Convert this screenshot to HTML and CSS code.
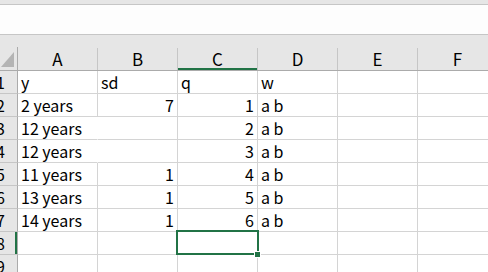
FILE: index.html
```html
<!DOCTYPE html>
<html lang="en">
<head>
    <meta charset="UTF-8">
    <title>Sheet1</title>
    <link rel="stylesheet" href="styles.css">
</head>
<body>
    <div class="formula-bar"></div>
    <div class="sheet">
        <div class="col-head-row">
            <div class="corner"><span class="corner-tri"></span></div>
            <div class="col-head">A</div>
            <div class="col-head">B</div>
            <div class="col-head active">C</div>
            <div class="col-head">D</div>
            <div class="col-head">E</div>
            <div class="col-head">F</div>
        </div>

        <div class="row">
            <div class="row-head">1</div>
            <div class="cell">y</div>
            <div class="cell">sd</div>
            <div class="cell">q</div>
            <div class="cell">w</div>
            <div class="cell"></div>
            <div class="cell"></div>
        </div>
        <div class="row">
            <div class="row-head">2</div>
            <div class="cell">2 years</div>
            <div class="cell num">7</div>
            <div class="cell num">1</div>
            <div class="cell">a b</div>
            <div class="cell"></div>
            <div class="cell"></div>
        </div>
        <div class="row">
            <div class="row-head">3</div>
            <div class="cell spill">12 years</div>
            <div class="cell"></div>
            <div class="cell num">2</div>
            <div class="cell">a b</div>
            <div class="cell"></div>
            <div class="cell"></div>
        </div>
        <div class="row">
            <div class="row-head">4</div>
            <div class="cell spill">12 years</div>
            <div class="cell"></div>
            <div class="cell num">3</div>
            <div class="cell">a b</div>
            <div class="cell"></div>
            <div class="cell"></div>
        </div>
        <div class="row">
            <div class="row-head">5</div>
            <div class="cell">11 years</div>
            <div class="cell num">1</div>
            <div class="cell num">4</div>
            <div class="cell">a b</div>
            <div class="cell"></div>
            <div class="cell"></div>
        </div>
        <div class="row">
            <div class="row-head">6</div>
            <div class="cell">13 years</div>
            <div class="cell num">1</div>
            <div class="cell num">5</div>
            <div class="cell">a b</div>
            <div class="cell"></div>
            <div class="cell"></div>
        </div>
        <div class="row">
            <div class="row-head">7</div>
            <div class="cell">14 years</div>
            <div class="cell num">1</div>
            <div class="cell num">6</div>
            <div class="cell">a b</div>
            <div class="cell"></div>
            <div class="cell"></div>
        </div>
        <div class="row">
            <div class="row-head active">8</div>
            <div class="cell"></div>
            <div class="cell"></div>
            <div class="cell selected"><span class="fill-handle"></span></div>
            <div class="cell"></div>
            <div class="cell"></div>
            <div class="cell"></div>
        </div>
        <div class="row">
            <div class="row-head">9</div>
            <div class="cell"></div>
            <div class="cell"></div>
            <div class="cell"></div>
            <div class="cell"></div>
            <div class="cell"></div>
            <div class="cell"></div>
        </div>
    </div>
</body>
</html>
```

FILE: styles.css
```css
body {
    margin: 0;
    width: 488px;
    height: 272px;
    overflow: hidden;
    background: #ffffff;
    font-family: "Noto Sans CJK SC", "Noto Sans", sans-serif;
    color: #000000;
}
.formula-bar {
    height: 30px;
    background: #fdfdfd;
    border-top: 4px solid #e6e6e6;
    border-bottom: 1px solid #c6c6c6;
    box-shadow: inset 0 1px 0 #c6c6c6;
}
.sheet {
    background: #e6e6e6;
    padding-top: 13px;
    width: 488px;
    overflow: hidden;
}
.col-head-row,
.row {
    display: grid;
    grid-template-columns: 18px repeat(6, 80px);
}
.col-head-row {
    height: 22px;
    border-bottom: 1px solid #ababab;
}
.corner {
    position: relative;
    border-right: 1px solid #ababab;
    margin-top: -1px;
}
.corner-tri {
    position: absolute;
    right: 3px;
    bottom: 3px;
    width: 0;
    height: 0;
    border-left: 13px solid transparent;
    border-bottom: 15px solid #b4b4b4;
}
.col-head {
    border-right: 1px solid #c6c6c6;
    text-align: center;
    font-size: 17px;
    line-height: 22px;
    color: #000000;
}
.col-head.active {
    box-shadow: inset 0 -2px 0 #217346;
}
.row {
    height: 23px;
    background: #ffffff;
}
.row-head {
    background: #e6e6e6;
    border-right: 1px solid #ababab;
    border-bottom: 1px solid #c6c6c6;
    font-size: 16px;
    line-height: 22px;
    color: #000000;
    overflow: hidden;
    white-space: nowrap;
    direction: rtl;
    padding-right: 12px;
}
.row-head.active {
    box-shadow: inset -2px 0 0 #217346;
}
.cell {
    border-right: 1px solid #d4d4d4;
    border-bottom: 1px solid #d4d4d4;
    font-size: 16px;
    line-height: 23px;
    padding: 0 3px;
    white-space: nowrap;
    overflow: hidden;
}
.cell.num {
    text-align: right;
}
.cell.spill {
    border-right-color: #ffffff;
}
.cell.selected {
    position: relative;
    overflow: visible;
}
.cell.selected::before {
    content: "";
    position: absolute;
    left: -2px;
    top: -2px;
    right: -2px;
    bottom: -1px;
    border: 2px solid #217346;
}
.fill-handle {
    position: absolute;
    right: -4px;
    bottom: -4px;
    width: 5px;
    height: 5px;
    background: #217346;
    border: 1px solid #ffffff;
    z-index: 1;
}
```
